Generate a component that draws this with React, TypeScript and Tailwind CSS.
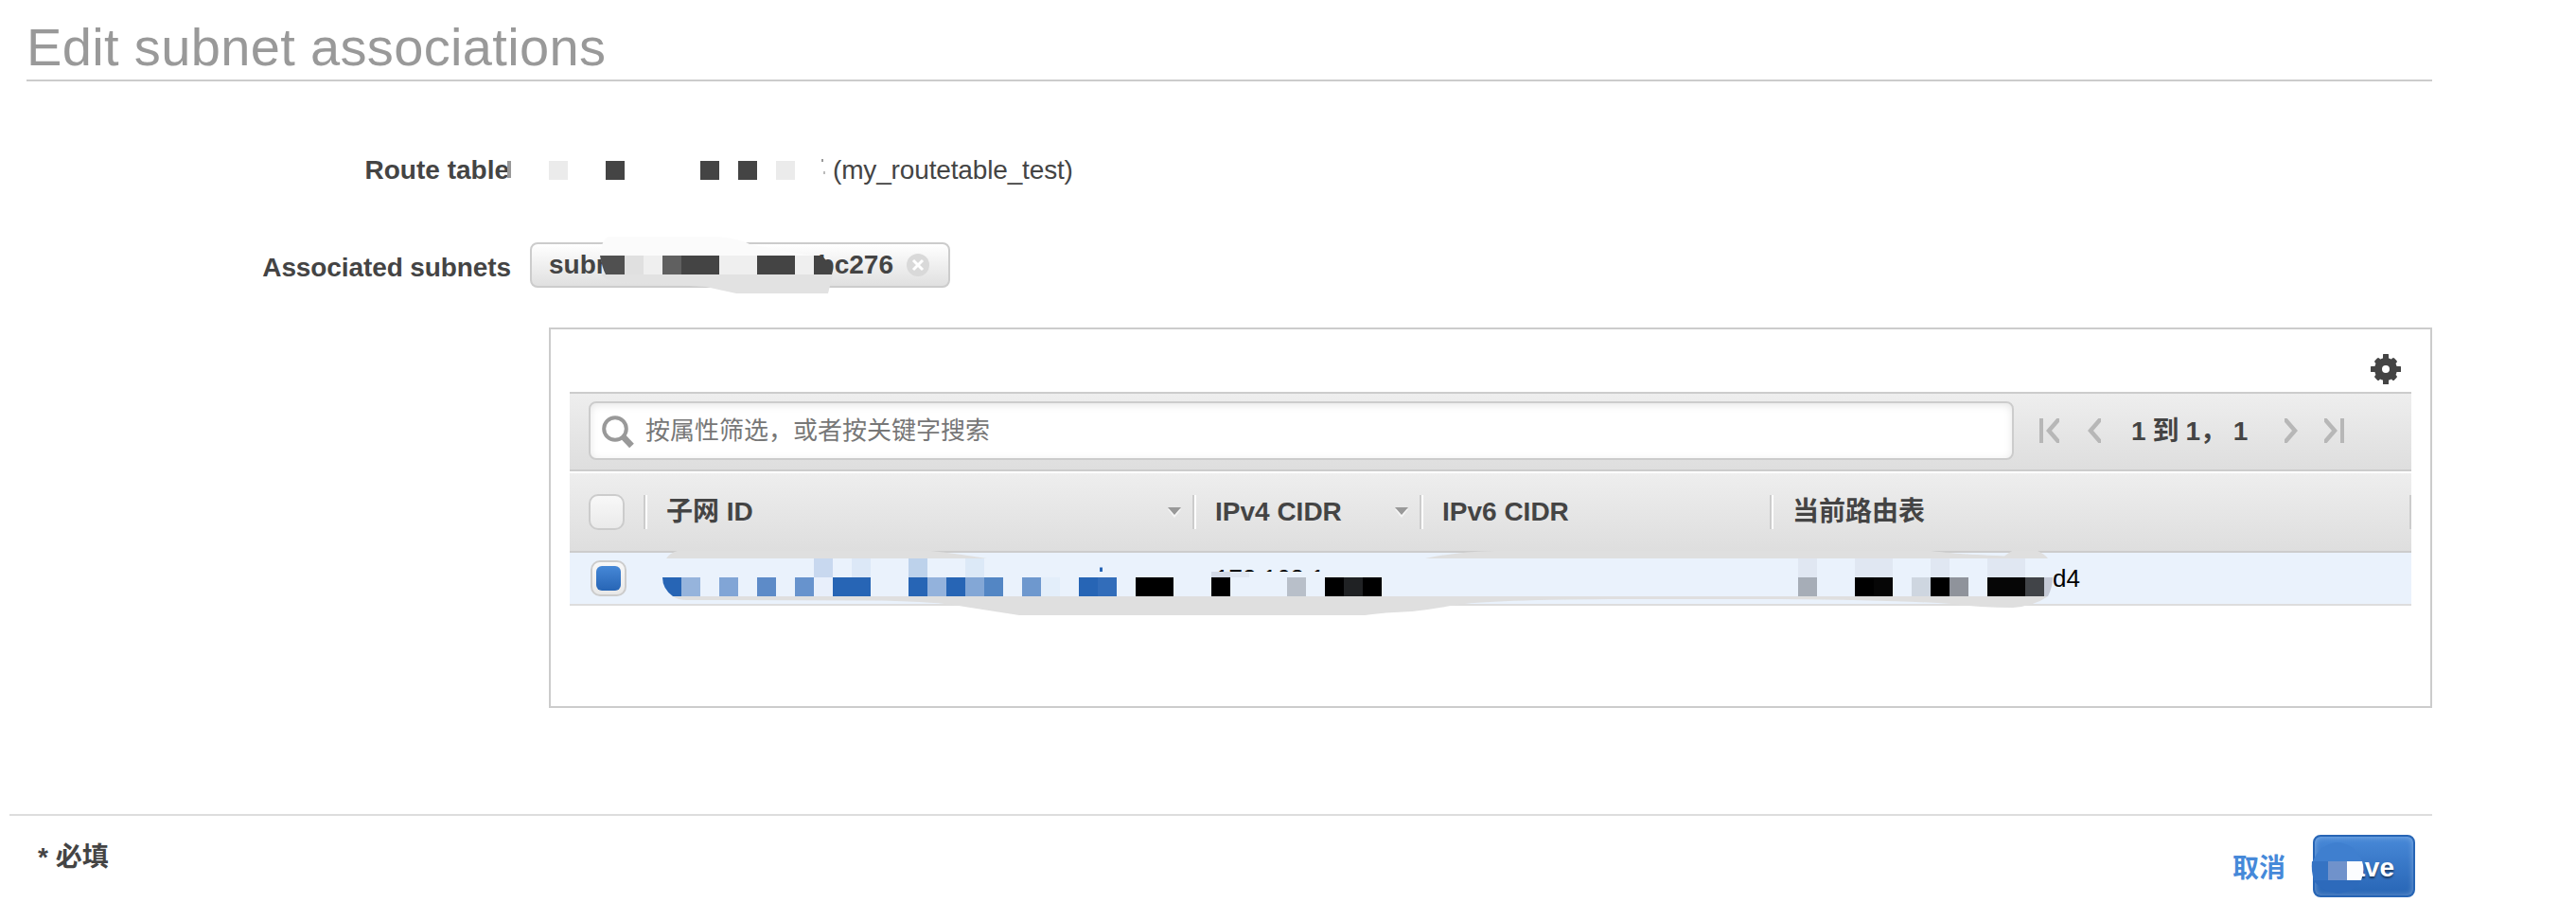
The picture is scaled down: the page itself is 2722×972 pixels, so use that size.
import React from 'react';

interface Block {
  x: number;
  y: number;
  w: number;
  h?: number;
  fill: string;
}

interface ColumnProps {
  label: string;
  className: string;
  sortable?: boolean;
}

const routeTableBlocks: Block[] = [
  { x: 0, y: 0, w: 20, fill: '#ebebeb' },
  { x: 60, y: 0, w: 20, fill: '#444' },
  { x: 160, y: 0, w: 20, fill: '#444' },
  { x: 200, y: 0, w: 20, fill: '#444' },
  { x: 240, y: 0, w: 20, fill: '#ebebeb' },
];

// coordinates are relative to the chip's outer box
const chipBlocks: Block[] = [
  { x: 80, y: 14, w: 20, fill: '#505050' },
  { x: 100, y: 14, w: 20, fill: '#e0e0e0' },
  { x: 120, y: 14, w: 20, fill: '#efefef' },
  { x: 140, y: 14, w: 20, fill: '#606060' },
  { x: 160, y: 14, w: 40, fill: '#444' },
  { x: 200, y: 14, w: 40, fill: '#efefef' },
  { x: 240, y: 14, w: 40, fill: '#444' },
  { x: 280, y: 14, w: 20, fill: '#efefef' },
];

// coordinates are relative to the row's top left corner
const rowBlocks: Block[] = [
  { x: 258, y: 6, w: 20, fill: '#c8d8ef' },
  { x: 298, y: 6, w: 20, fill: '#dce8f7' },
  { x: 358, y: 6, w: 20, fill: '#bdd2eb' },
  { x: 418, y: 6, w: 20, fill: '#dce9f7' },
  { x: 118, y: 26, w: 20, fill: '#96b4dc' },
  { x: 158, y: 26, w: 20, fill: '#81a5d6' },
  { x: 198, y: 26, w: 20, fill: '#5d8bc8' },
  { x: 238, y: 26, w: 20, fill: '#6793cd' },
  { x: 258, y: 26, w: 20, fill: '#e8effb' },
  { x: 278, y: 26, w: 40, fill: '#2765b5' },
  { x: 358, y: 26, w: 20, fill: '#2765b5' },
  { x: 378, y: 26, w: 20, fill: '#93b2dc' },
  { x: 398, y: 26, w: 20, fill: '#2765b5' },
  { x: 418, y: 26, w: 20, fill: '#83a7d6' },
  { x: 438, y: 26, w: 20, fill: '#5386c4' },
  { x: 478, y: 26, w: 20, fill: '#6e98ce' },
  { x: 498, y: 26, w: 20, fill: '#e3eefa' },
  { x: 538, y: 26, w: 20, fill: '#2765b5' },
  { x: 558, y: 26, w: 20, fill: '#326dba' },
  { x: 560, y: 15.5, w: 3, h: 4.5, fill: '#2765b5' },
  { x: 598, y: 26, w: 40, fill: '#000' },
  { x: 678, y: 20, w: 20, h: 6, fill: '#d3dae6' },
  { x: 698, y: 20, w: 20, h: 6, fill: '#e0e7f2' },
  { x: 678, y: 26, w: 20, fill: '#000' },
  { x: 758, y: 26, w: 20, fill: '#b8bfc9' },
  { x: 798, y: 26, w: 20, fill: '#000' },
  { x: 818, y: 26, w: 20, fill: '#202224' },
  { x: 838, y: 26, w: 20, fill: '#000' },
  { x: 1298, y: 6, w: 20, fill: '#e0e7f2' },
  { x: 1298, y: 26, w: 20, fill: '#a6adb7' },
  { x: 1358, y: 6, w: 40, fill: '#e0e7f2' },
  { x: 1358, y: 26, w: 20, fill: '#000' },
  { x: 1378, y: 26, w: 20, fill: '#060606' },
  { x: 1418, y: 26, w: 20, fill: '#ced6e0' },
  { x: 1438, y: 6, w: 20, fill: '#e0e7f2' },
  { x: 1438, y: 26, w: 20, fill: '#000' },
  { x: 1458, y: 26, w: 20, fill: '#8f939b' },
  { x: 1498, y: 6, w: 40, fill: '#e0e7f2' },
  { x: 1498, y: 26, w: 40, fill: '#060606' },
  { x: 1538, y: 26, w: 20, fill: '#414448' },
];

function Blocks({ items }: { items: Block[] }) {
  return (
    <>
      {items.map((b, index) => (
        <rect key={index} x={b.x} y={b.y} width={b.w} height={b.h ?? 20} fill={b.fill} />
      ))}
    </>
  );
}

function SearchIcon() {
  return (
    <svg className="w-9 h-9 mt-1 shrink-0" viewBox="0 0 36 36" fill="none" stroke="#999">
      <circle cx="15" cy="14" r="11.8" strokeWidth="4" />
      <path d="M23 22l9.5 10" strokeWidth="6.5" />
    </svg>
  );
}

function GearIcon() {
  return (
    <svg className="w-8 h-8" viewBox="-16 -16 32 32">
      <circle r="8" fill="none" stroke="#444" strokeWidth="8" />
      {[0, 90, 180, 270].map((a) => (
        <rect key={a} x="-3" y="-16" width="6" height="7" rx="0.5" fill="#444" transform={`rotate(${a})`} />
      ))}
      {[45, 135, 225, 315].map((a) => (
        <rect key={a} x="-3.2" y="-14.5" width="6.4" height="6" rx="1.5" fill="#444" transform={`rotate(${a})`} />
      ))}
    </svg>
  );
}

function Column({ label, className, sortable }: ColumnProps) {
  return (
    <div className={`flex items-center shrink-0 ${className}`}>
      <div className="w-1 h-9 shrink-0 bg-white border-l-2 border-[#ccc]" />
      <span className="pl-5 grow">{label}</span>
      {sortable && (
        <svg className="w-4 h-3 mr-[11px]" viewBox="0 0 16 12">
          <path d="M1 3h14l-7 9z" fill="#f6f6f6" />
          <path d="M1 1h14l-7 8z" fill="#999" />
        </svg>
      )}
    </div>
  );
}

function Pager() {
  return (
    <div className="flex items-center pt-0.5 pl-[27px] text-[28px] font-bold">
      <svg className="w-[21px] h-[26px]" viewBox="0 0 21 26" fill="none" stroke="#b7b7b7">
        <path d="M2 0v26" strokeWidth="4" />
        <path d="M23 -2L10 13l13 15" strokeWidth="4.5" />
      </svg>
      <svg className="w-[15px] h-[26px] ml-[29px]" viewBox="0 0 15 26" fill="none" stroke="#b7b7b7">
        <path d="M17 -2L4 13l13 15" strokeWidth="4.5" />
      </svg>
      <span className="w-[130px] pt-0.5 ml-8 tracking-[-0.4px] whitespace-pre">1 到 1， 1</span>
      <svg className="w-[15px] h-[26px] ml-8" viewBox="0 0 15 26" fill="none" stroke="#b7b7b7">
        <path d="M-2 -2l13 15L-2 28" strokeWidth="4.5" />
      </svg>
      <svg className="w-[21px] h-[26px] ml-[27px]" viewBox="0 0 21 26" fill="none" stroke="#b7b7b7">
        <path d="M19 0v26" strokeWidth="4" />
        <path d="M-2 -2l13 15L-2 28" strokeWidth="4.5" />
      </svg>
    </div>
  );
}

function SubnetChip() {
  return (
    <div className="relative flex items-center w-[444px] h-12 pl-[18px] rounded-lg border-2 border-[#ccc] bg-linear-to-b from-white to-[#e0e0e0] font-bold">
      <span className="w-[120px]">subnet</span>
      <span className="ml-[164px] w-[80px] text-right">bc276</span>
      <svg className="w-6 h-6 ml-[14px]" viewBox="0 0 24 24">
        <circle cx="12" cy="12" r="12" fill="#d9d9d9" />
        <path d="M7 7l10 10M17 7L7 17" stroke="#fff" strokeWidth="3" />
      </svg>
      <svg className="absolute -left-0.5 -top-2 w-[444px] h-[62px]" viewBox="0 -6 444 62">
        <path d="M74 14Q76 -5 84 -6H196Q222 -4 232 2Q270 10 300 14z" fill="#fbfbfb" />
        <path d="M76 34Q80 42 96 42L186 47L218 54H315L320 34z" fill="#e2e2e2" />
        <path d="M74 14h6v20q-4-8-6-20z" fill="#505050" />
        <Blocks items={chipBlocks} />
        <path d="M300 14h9q2 5 10 8q2 6 0 12h-19z" fill="#444" />
      </svg>
    </div>
  );
}

function SubnetRow() {
  return (
    <div className="relative flex items-center h-14 border-b-2 border-[#ddd] bg-[#eaf2fc] text-[26px] text-black">
      <div className="flex items-center justify-center w-[38px] h-[38px] ml-[22px] rounded-[10px] border-2 border-[#ccc] bg-linear-to-b from-[#f8f8f8] to-[#e8e8e8]">
        <div className="w-[26px] h-[26px] rounded-md bg-linear-to-b from-[#4688d7] to-[#2765b5]" />
      </div>
      <span className="ml-[622px] w-[200px]">172.168.1</span>
      <span className="ml-[685px]">d4</span>
      <svg className="absolute left-0 -top-0.5 w-[1946px] h-[70px]" viewBox="0 -2 1946 70">
        <rect x="678" y="20" width="190" height="16" fill="#eaf2fc" />
        <path d="M102 6Q106 0 114 -2H382Q410 1 441 6z" fill="#dfdfdf" />
        <path d="M904 6Q936 -1 978 -2H1438Q1470 2 1512 3L1524 -2H1551Q1558 1 1562 6z" fill="#dfdfdf" />
        <path d="M1460 0L1516 3.5L1521 0z" fill="#eaf2fc" />
        <path d="M1440 -2h84l-3 2h-60z" fill="#ccc" />
        <path
          d="M109 46Q114 50 124 50L330 50.5Q390 52 411 56L475 66H840Q860 63 890 62Q910 60 931 56Q960 50 1098 49H1280Q1400 50 1460 54Q1490 58 1525 58Q1548 56 1562 46z"
          fill="#dfdfdf"
        />
        <path d="M98 26h20v20h-9q-11-8-11-20z" fill="#2765b5" />
        <Blocks items={rowBlocks} />
        <path d="M1558 26h9q0 10-5 20h-4z" fill="#c5cad6" />
      </svg>
    </div>
  );
}

function SubnetTable() {
  return (
    <div className="w-[1990px] h-[402px] ml-[552px] px-5 border-2 border-[#ccc]">
      <div className="flex justify-end h-[66px] pt-[26px] pr-[11px]">
        <GearIcon />
      </div>
      <div className="flex items-center h-[84px] pl-5 pb-1 border-y-2 border-[#ccc] bg-linear-to-b from-[#eee] to-[#dedede]">
        <div className="flex items-center w-[1506px] h-[62px] pl-[11px] mt-0.5 gap-[11px] rounded-lg border-2 border-[#ccc] bg-white shadow-[inset_0_2px_8px_rgba(0,0,0,0.1)]">
          <SearchIcon />
          <span className="pt-px text-[26px] text-[#777]">按属性筛选，或者按关键字搜索</span>
        </div>
        <Pager />
      </div>
      <div className="flex items-center h-[86px] pt-0.5 border-t-2 border-t-white border-b-2 border-b-[#ccc] bg-linear-to-b from-[#eee] to-[#dedede] text-[28px] font-bold">
        <div className="w-[38px] h-[38px] mx-5 -mt-0.5 shrink-0 rounded-[10px] border-2 border-[#ccc] bg-linear-to-b from-[#f8f8f8] to-[#eaeaea]" />
        <div className="flex -mt-0.5">
          <Column label="子网 ID" className="w-[580px]" sortable />
          <Column label="IPv4 CIDR" className="w-[240px]" sortable />
          <Column label="IPv6 CIDR" className="w-[370px]" />
          <Column label="当前路由表" className="w-[676px]" />
          <div className="w-0.5 h-9 mt-[3px] bg-[#ccc]" />
        </div>
      </div>
      <SubnetRow />
    </div>
  );
}

function Footer() {
  return (
    <footer className="flex justify-between w-[2560px] ml-2.5 mt-28 pl-[30px] pr-[18px] border-t-2 border-[#ddd] text-[28px] font-bold">
      <span className="pt-[23px]">* 必填</span>
      <div className="flex items-start pt-5 gap-[29px]">
        <span className="pt-[15px] text-[#4689d9]">取消</span>
        <button className="relative flex items-center justify-end w-[108px] h-[66px] pt-1 pr-5 rounded-lg border-2 border-[#2765b5] bg-linear-to-b from-[#4889d8] to-[#2765b5] text-white shadow-[inset_0_0_6px_rgba(255,255,255,0.35)] [text-shadow:0_2px_2px_rgba(0,0,0,0.5)]">
          ave
          <svg className="absolute -left-1 top-1.5 w-14 h-[54px]" viewBox="0 0 56 54">
            <path d="M2 20Q10 1 28 0Q46 1 54 20z" fill="#3f7fcf" />
            <path d="M2 40Q12 52 28 54Q46 52 53 40z" fill="#2d6abb" />
            <path d="M1 20h17v20H3q-3-10-2-20z" fill="#3573c3" />
            <rect x="18" y="20" width="20" height="20" fill="#7092cb" />
            <path d="M38 20h16q3 10-1 20H38z" fill="#fcfdff" />
          </svg>
        </button>
      </div>
    </footer>
  );
}

export default function App() {
  return (
    <div className="w-[2722px] h-[972px] overflow-hidden bg-white text-[28px] text-[#444] font-['Liberation_Sans','Noto_Sans_CJK_SC',sans-serif]">
      <main className="ml-7 w-[2542px]">
        <h1 className="h-[86px] pt-[18px] border-b-2 border-[#ccc] text-[56px] leading-[64px] tracking-[0.35px] text-[#999]">
          Edit subnet associations
        </h1>
        <div className="flex items-center h-12 mt-[70px] tracking-[-0.15px]">
          <span className="w-[510px] text-right font-bold tracking-normal">Route table</span>
          <div className="w-1 h-[18px] -ml-0.5 -mt-0.5 bg-[#999]" />
          <svg className="w-[300px] h-12 ml-10" viewBox="0 -14 300 48">
            <Blocks items={routeTableBlocks} />
            <rect x="288" y="-2" width="2" height="3" fill="#999" />
            <rect x="290" y="11" width="2" height="3" fill="#bbb" />
          </svg>
          <span>(my_routetable_test)</span>
        </div>
        <div className="flex items-center h-12 mt-[52px]">
          <span className="w-[512px] mr-5 pt-1.5 text-right font-bold tracking-[-0.1px]">Associated subnets</span>
          <SubnetChip />
        </div>
        <div className="mt-[42px]">
          <SubnetTable />
        </div>
      </main>
      <Footer />
    </div>
  );
}
